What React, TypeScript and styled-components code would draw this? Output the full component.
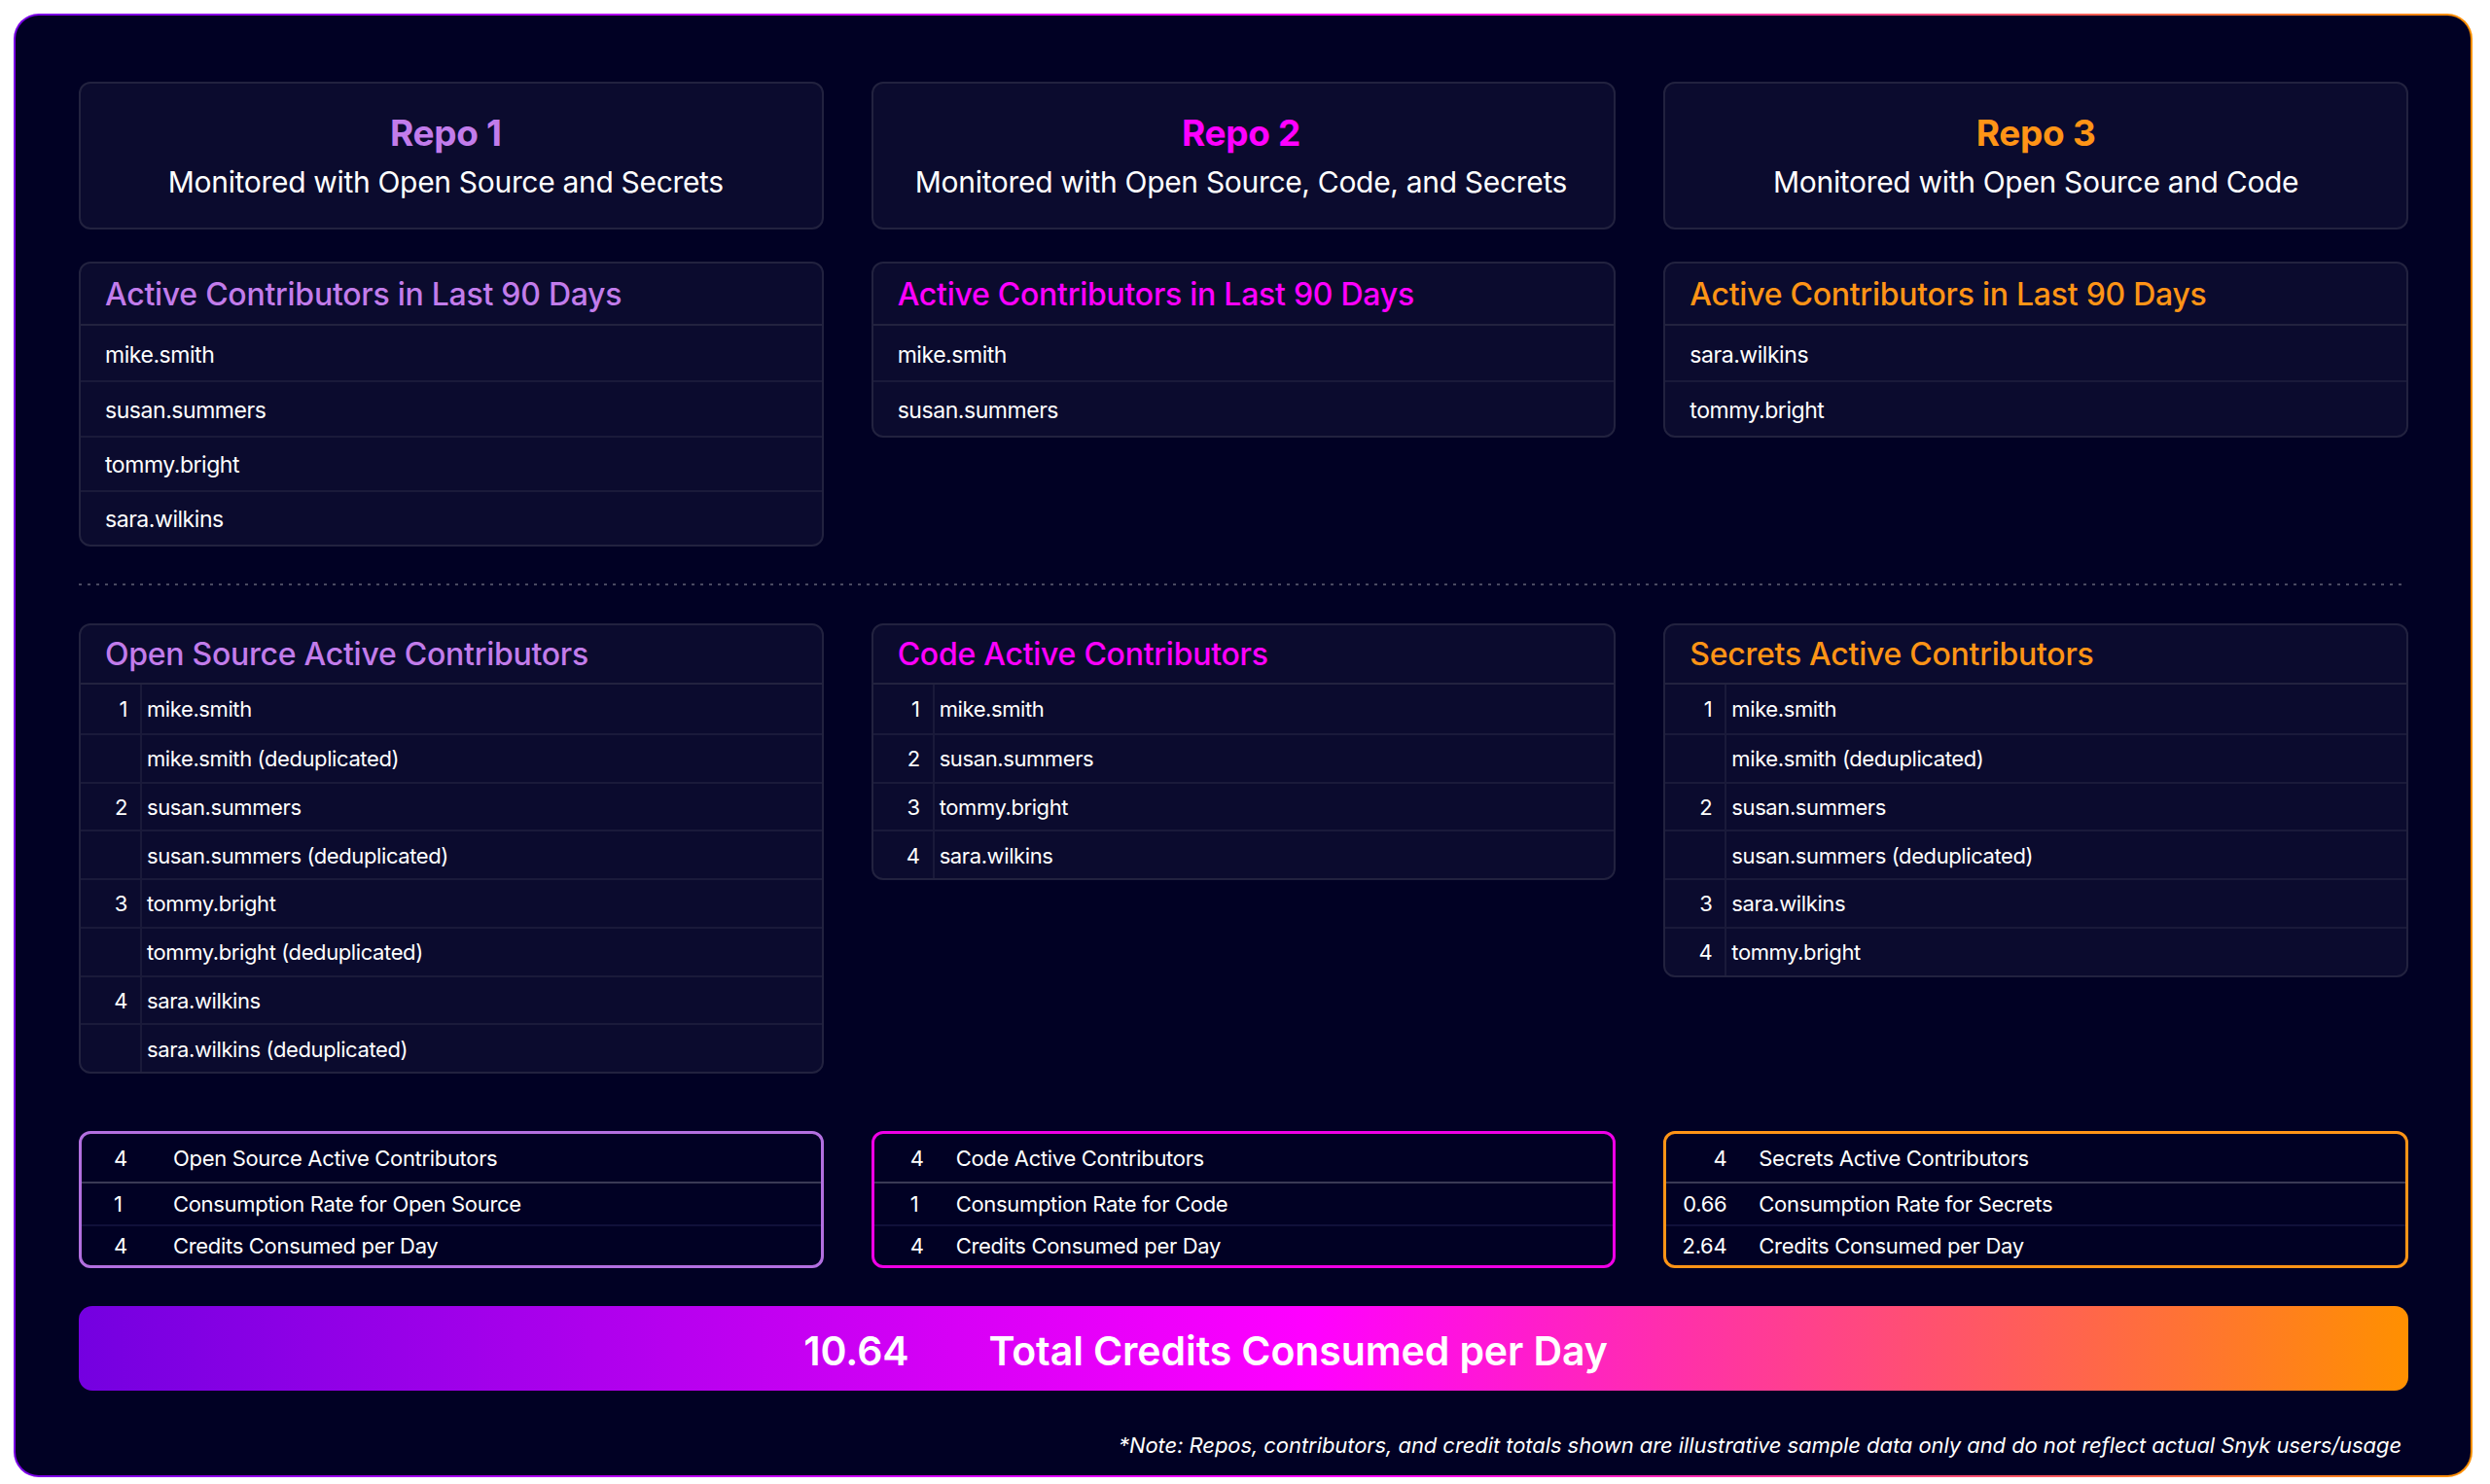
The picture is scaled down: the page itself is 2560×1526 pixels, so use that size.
import React from "react";
import styled, { createGlobalStyle } from "styled-components";

const GlobalStyle = createGlobalStyle`
  html, body {
    margin: 0;
    padding: 0;
    background: #ffffff;
  }
`;

type Accent = { $accent: string };
const fontStack = `Inter, "Liberation Sans", sans-serif`;

const Frame = styled.div`
  box-sizing: border-box;
  margin: 14px 18px 0 14px;
  height: 1505px;
  padding: 2px;
  border-radius: 26px;
  background: linear-gradient(90deg, #7a00e6 0%, #ff00ff 55%, #ff9000 100%);
`;

const Inner = styled.div`
  box-sizing: border-box;
  height: 100%;
  padding: 68px 64px 0 65px;
  border-radius: 24px;
  background: #010124;
  font-family: ${fontStack};
  color: #fff;
`;

const Columns = styled.div`
  display: grid;
  grid-template-columns: repeat(3, 1fr);
  column-gap: 49px;
  align-items: start;
`;

const Card = styled.div`
  box-sizing: border-box;
  border: 2px solid #22223f;
  border-radius: 12px;
  background: #0b0b2e;
  overflow: hidden;
`;

const RepoCard = styled(Card)<{ $shift: number }>`
  height: 152px;
  margin-bottom: 33px;
  display: flex;
  flex-direction: column;
  align-items: center;
  padding-top: 29px;
  padding-right: ${(p) => p.$shift}px;
`;

const RepoName = styled.div<Accent>`
  font-size: 37px;
  line-height: 44px;
  font-weight: 700;
  letter-spacing: -0.3px;
  color: ${(p) => p.$accent};
`;

const RepoNote = styled.div`
  font-size: 30px;
  line-height: 44px;
  margin-top: 6px;
  letter-spacing: -0.32px;
`;

const CardHead = styled.div<Accent & { $height: number }>`
  box-sizing: border-box;
  height: ${(p) => p.$height}px;
  display: flex;
  align-items: center;
  padding-left: 25px;
  font-size: 32px;
  font-weight: 500;
  letter-spacing: -0.26px;
  color: ${(p) => p.$accent};
  border-bottom: 2px solid #22223f;
`;

const NameRow = styled.div`
  box-sizing: border-box;
  height: 56.25px;
  display: flex;
  align-items: center;
  padding: 3px 0 0 25px;
  font-size: 23px;
  letter-spacing: -0.45px;
  & + & {
    border-top: 2px solid #1a1a3a;
  }
`;

const Divider = styled.div`
  height: 2px;
  margin: 38px 4px 39px 0;
  background: repeating-linear-gradient(90deg, #4a4a62 0 3px, transparent 3px 9px);
`;

const NumRow = styled.div`
  box-sizing: border-box;
  height: 49.75px;
  display: grid;
  grid-template-columns: 63px 1fr;
  align-items: stretch;
  font-size: 22px;
  letter-spacing: -0.4px;
  & + & {
    border-top: 2px solid #1a1a3a;
  }
`;

const NumCell = styled.div`
  display: flex;
  align-items: center;
  justify-content: flex-end;
  padding: 1px 13px 0 0;
  border-right: 2px solid #1a1a3a;
`;

const TextCell = styled.div`
  display: flex;
  align-items: center;
  padding: 1px 0 0 5px;
`;

const Summaries = styled(Columns)`
  margin-top: 59px;
`;

const SummaryBox = styled.div<Accent>`
  box-sizing: border-box;
  height: 141px;
  border: 3px solid ${(p) => p.$accent};
  border-radius: 12px;
  display: grid;
  grid-template-rows: 51px 44px 1fr;
  font-size: 22px;
  letter-spacing: -0.32px;
`;

const SummaryRow = styled.div<{ $pad: number; $numWidth: number; $gap: number; $divider?: string }>`
  display: grid;
  grid-template-columns: ${(p) => p.$numWidth}px 1fr;
  column-gap: ${(p) => p.$gap}px;
  padding-left: ${(p) => p.$pad}px;
  align-items: center;
  ${(p) => (p.$divider ? `border-bottom: 2px solid ${p.$divider};` : "")}
`;

const SummaryNum = styled.div<{ $right: boolean }>`
  text-align: ${(p) => (p.$right ? "right" : "left")};
`;

const TotalBar = styled.div`
  box-sizing: border-box;
  height: 87px;
  margin-top: 39px;
  padding: 4px 78px 0 0;
  border-radius: 14px;
  background: linear-gradient(90deg, #7400e0 0%, #ff00ff 53%, #ff9000 100%);
  display: flex;
  align-items: center;
  justify-content: center;
  gap: 82px;
  font-size: 41px;
  font-weight: 600;
  letter-spacing: -0.1px;
`;

const Note = styled.div`
  margin-top: 43px;
  padding-right: 7px;
  text-align: right;
  font-size: 22px;
  letter-spacing: -0.07px;
  font-style: italic;
`;

const PURPLE = "#c27ceb";
const MAGENTA = "#ff00ff";
const ORANGE = "#ff9416";

const repos = [
  { name: "Repo 1", note: "Monitored with Open Source and Secrets", accent: PURPLE, shift: 11, people: ["mike.smith", "susan.summers", "tommy.bright", "sara.wilkins"] },
  { name: "Repo 2", note: "Monitored with Open Source, Code, and Secrets", accent: MAGENTA, shift: 5, people: ["mike.smith", "susan.summers"] },
  { name: "Repo 3", note: "Monitored with Open Source and Code", accent: ORANGE, shift: 0, people: ["sara.wilkins", "tommy.bright"] },
];

const products = [
  {
    title: "Open Source Active Contributors",
    accent: PURPLE,
    rows: [
      ["1", "mike.smith"], ["", "mike.smith (deduplicated)"],
      ["2", "susan.summers"], ["", "susan.summers (deduplicated)"],
      ["3", "tommy.bright"], ["", "tommy.bright (deduplicated)"],
      ["4", "sara.wilkins"], ["", "sara.wilkins (deduplicated)"],
    ],
  },
  {
    title: "Code Active Contributors",
    accent: MAGENTA,
    rows: [["1", "mike.smith"], ["2", "susan.summers"], ["3", "tommy.bright"], ["4", "sara.wilkins"]],
  },
  {
    title: "Secrets Active Contributors",
    accent: ORANGE,
    rows: [
      ["1", "mike.smith"], ["", "mike.smith (deduplicated)"],
      ["2", "susan.summers"], ["", "susan.summers (deduplicated)"],
      ["3", "sara.wilkins"], ["4", "tommy.bright"],
    ],
  },
];

const summaries = [
  { accent: "#b26fe0", pad: 33, numWidth: 30, gap: 31, right: false, label: "Open Source", rate: "1", credits: "4" },
  { accent: "#ef00e6", pad: 37, numWidth: 20, gap: 27, right: false, label: "Code", rate: "1", credits: "4" },
  { accent: "#ff9416", pad: 0, numWidth: 62, gap: 33, right: true, label: "Secrets", rate: "0.66", credits: "2.64" },
];

export default function App() {
  return (
    <>
      <GlobalStyle />
      <Frame>
        <Inner>
          <Columns>
            {repos.map((r) => (
              <div key={r.name}>
                <RepoCard $shift={r.shift}>
                  <RepoName $accent={r.accent}>{r.name}</RepoName>
                  <RepoNote>{r.note}</RepoNote>
                </RepoCard>
                <Card>
                  <CardHead $accent={r.accent} $height={64}>Active Contributors in Last 90 Days</CardHead>
                  {r.people.map((p) => (
                    <NameRow key={p}>{p}</NameRow>
                  ))}
                </Card>
              </div>
            ))}
          </Columns>
          <Divider />
          <Columns>
            {products.map((p) => (
              <Card key={p.title}>
                <CardHead $accent={p.accent} $height={61}>{p.title}</CardHead>
                {p.rows.map(([n, t]) => (
                  <NumRow key={t}>
                    <NumCell>{n}</NumCell>
                    <TextCell>{t}</TextCell>
                  </NumRow>
                ))}
              </Card>
            ))}
          </Columns>
          <Summaries>
            {summaries.map((s) => {
              const layout = { $pad: s.pad, $numWidth: s.numWidth, $gap: s.gap };
              return (
                <SummaryBox key={s.label} $accent={s.accent}>
                  <SummaryRow {...layout} $divider="#3a3a55">
                    <SummaryNum $right={s.right}>4</SummaryNum>
                    <div>{s.label} Active Contributors</div>
                  </SummaryRow>
                  <SummaryRow {...layout} $divider="#10103a">
                    <SummaryNum $right={s.right}>{s.rate}</SummaryNum>
                    <div>Consumption Rate for {s.label}</div>
                  </SummaryRow>
                  <SummaryRow {...layout}>
                    <SummaryNum $right={s.right}>{s.credits}</SummaryNum>
                    <div>Credits Consumed per Day</div>
                  </SummaryRow>
                </SummaryBox>
              );
            })}
          </Summaries>
          <TotalBar>
            <span>10.64</span>
            <span>Total Credits Consumed per Day</span>
          </TotalBar>
          <Note>*Note: Repos, contributors, and credit totals shown are illustrative sample data only and do not reflect actual Snyk users/usage</Note>
        </Inner>
      </Frame>
    </>
  );
}
